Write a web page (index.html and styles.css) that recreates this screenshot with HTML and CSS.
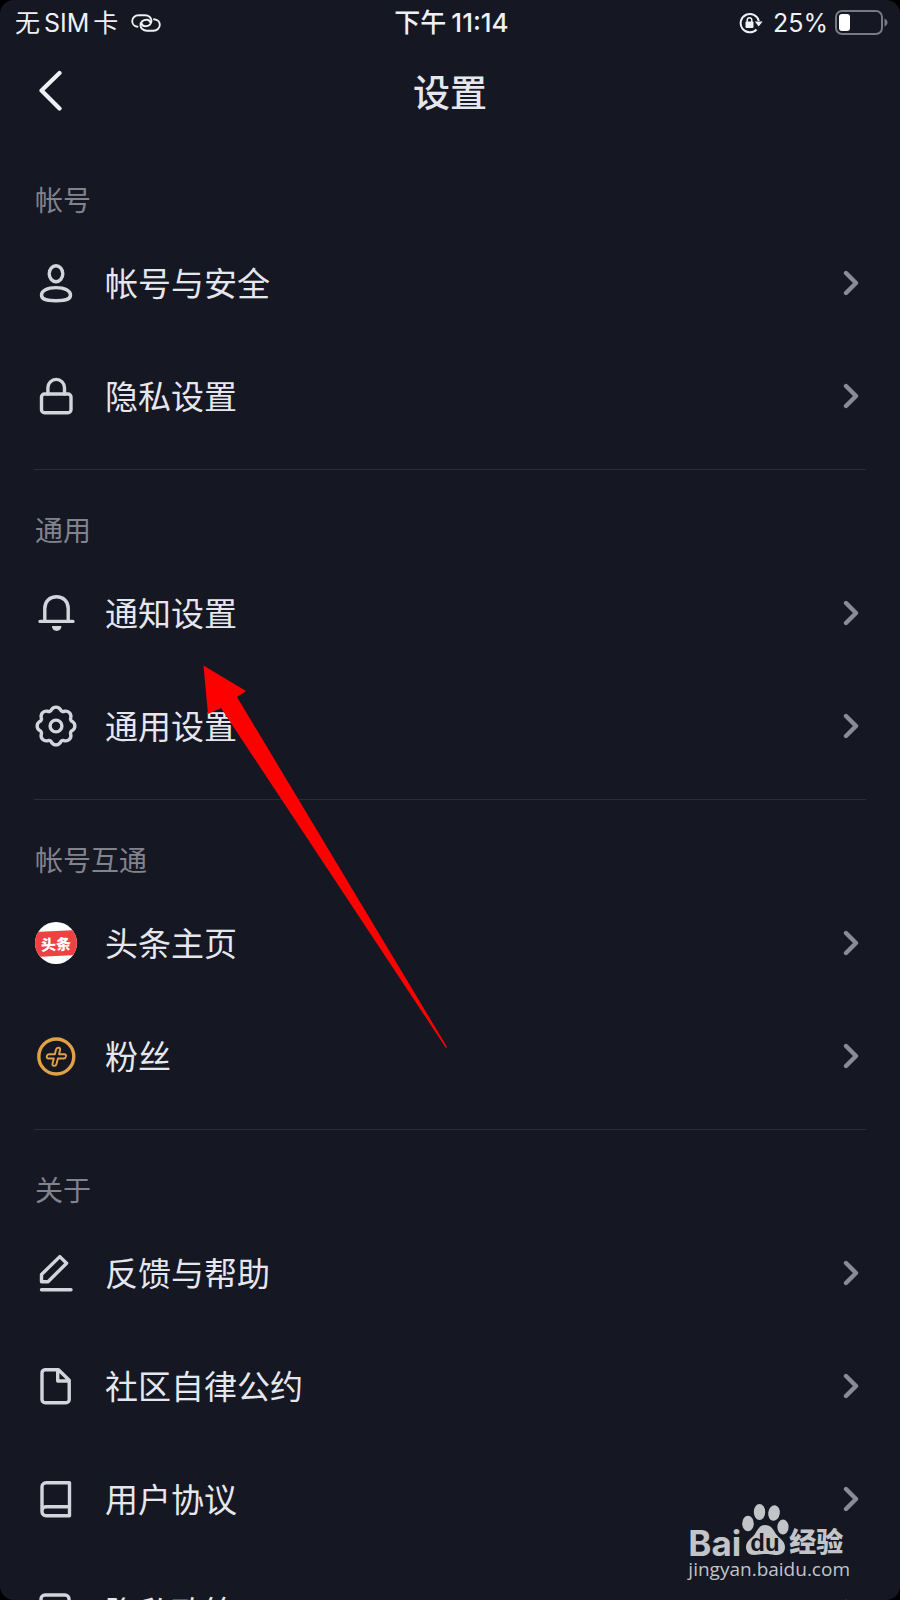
FILE: index.html
```html
<!DOCTYPE html>
<html lang="zh-CN">
<head>
<meta charset="utf-8">
<meta name="viewport" content="width=device-width, initial-scale=1">
<title>设置</title>
<link rel="stylesheet" href="styles.css">
</head>
<body>
<svg class="sprite" width="0" height="0" aria-hidden="true">
  <symbol id="chevron" viewBox="0 0 16 26"><path d="M3 3l10 10L3 23" stroke-width="4.400"/></symbol>
</svg>
<div class="screen">
  <div class="status">
    <div class="status-left">
      <div class="carrier"><span>无</span><span>SIM</span><span>卡</span></div>
      <svg class="line" width="30" height="18" viewBox="0 0 30 18" aria-hidden="true"><path d="M6.500 12.700C3 12.500 1.200 9.500 1.200 7C1.200 3.800 4 1.300 7.500 1.300h6.500c4 0 6.500 2.700 6.500 5.500c0 3.200-2.600 5.400-6 5.400c-2.300 0-3.200-.8-3.200-2M23 5.300c4 .2 5.800 3 5.800 5.500c0 3.400-2.800 5.900-6.300 5.900h-6.500c-4 0-6.500-2.700-6.500-5.500c0-3.200 2.600-5.400 6-5.400c2.300 0 3.200.8 3.200 2" stroke-width="1.900"/></svg>
    </div>
    <div class="status-time"><span>下午</span><span>11:14</span></div>
    <div class="status-right">
      <svg width="24" height="22" viewBox="0 0 24 22" aria-hidden="true"><path d="M17.500 17.500A9.200 9.200 0 1 1 19.800 9" fill="none" stroke="#eff0f5" stroke-width="2"/><path d="M15.800 9.500h7.800l-3.900 5z" fill="#eff0f5"/><rect x="6.500" y="9.600" width="8" height="6.400" rx="1" fill="#eff0f5"/><path d="M8.200 10V8a2.300 2.300 0 0 1 4.600 0v2" fill="none" stroke="#eff0f5" stroke-width="1.500"/></svg>
      <span>25%</span>
      <svg width="53" height="26" viewBox="0 0 53 26" aria-hidden="true"><rect x="1" y="1" width="46" height="23" rx="6" fill="none" stroke="#777983" stroke-width="2"/><rect x="4" y="4" width="11" height="17" rx="3" fill="#fff"/><path d="M49.500 8.500c4 2 4 6 0 8z" fill="#777983"/></svg>
    </div>
  </div>
  <header class="titlebar">
    <button class="back" type="button" aria-label="返回"><svg class="line" width="24" height="42" viewBox="0 0 24 42"><path d="M21.500 3L3.500 20.500l18 18" stroke-width="4.200"/></svg></button>
    <h1 class="title">设置</h1>
  </header>
  <main>
    <section class="group">
      <h2 class="heading">帐号</h2>
      <a class="row" href="#"><svg class="icon" viewBox="0 0 42 42"><ellipse cx="21" cy="11.700" rx="6.800" ry="8"/><path d="M21 25.600c-9 0-14.500 3-14.500 7.500c0 3.500 2.500 5.700 14.500 5.700s14.500-2.200 14.500-5.700c0-4.500-5.500-7.500-14.500-7.500z"/></svg><span class="label">帐号与安全</span><svg class="chevron"><use href="#chevron"/></svg></a>
      <a class="row" href="#"><svg class="icon" viewBox="0 0 42 42"><rect x="6.500" y="19" width="29.500" height="18.700" rx="3"/><path d="M12.900 19v-6.300a8.300 8.300 0 0 1 16.600 0V19"/></svg><span class="label">隐私设置</span><svg class="chevron"><use href="#chevron"/></svg></a>
    </section>
    <section class="group">
      <h2 class="heading">通用</h2>
      <a class="row" href="#"><svg class="icon" viewBox="0 0 42 42"><path d="M5 29.400h33M9.800 29V16.500c0-7 4.800-11.700 11.700-11.700s11.700 4.700 11.700 11.700V29"/><path d="M17 34h9.400c0 6.500-9.400 6.500-9.400 0z" class="solid"/></svg><span class="label">通知设置</span><svg class="chevron"><use href="#chevron"/></svg></a>
      <a class="row" href="#"><svg class="icon" viewBox="0 0 42 42"><circle cx="21" cy="21" r="5.900"/><path d="M16.600 4.500A5.300 5.300 0 0 1 25.400 4.500A3 3 0 0 0 29.600 6.200A5.300 5.300 0 0 1 35.800 12.400A3 3 0 0 0 37.500 16.600A5.300 5.300 0 0 1 37.500 25.400A3 3 0 0 0 35.800 29.600A5.300 5.300 0 0 1 29.600 35.800A3 3 0 0 0 25.400 37.500A5.300 5.300 0 0 1 16.600 37.500A3 3 0 0 0 12.400 35.800A5.300 5.300 0 0 1 6.200 29.600A3 3 0 0 0 4.500 25.400A5.300 5.300 0 0 1 4.500 16.600A3 3 0 0 0 6.200 12.400A5.300 5.300 0 0 1 12.400 6.200A3 3 0 0 0 16.600 4.500z"/></svg><span class="label">通用设置</span><svg class="chevron"><use href="#chevron"/></svg></a>
    </section>
    <section class="group">
      <h2 class="heading">帐号互通</h2>
      <a class="row" href="#"><span class="toutiao"><span class="toutiao-band">头条</span></span><span class="label">头条主页</span><svg class="chevron"><use href="#chevron"/></svg></a>
      <a class="row" href="#"><svg class="icon fans" viewBox="0 0 42 42"><circle cx="21.300" cy="21.500" r="17.500"/><path d="M21 14.500q.5-2 2.600-1.800q2 .2 1.500 2l-1.100 4.500h5.300q2 .2 1.700 2.200q-.4 2-2.300 2.100h-5.800l-1.400 5.600q-.5 2-2.500 1.800q-2-.2-1.500-2.200l1.300-5.200h-5.300q-2-.2-1.700-2.200q.4-2 2.300-2.100h5.800z" stroke-width="1.900"/></svg><span class="label">粉丝</span><svg class="chevron"><use href="#chevron"/></svg></a>
    </section>
    <section class="group">
      <h2 class="heading">关于</h2>
      <a class="row" href="#"><svg class="icon" viewBox="0 0 42 42"><path d="M24.800 4.600l6.800 6.600L13 29.700H6.500v-7.200zM6.500 37.700H36"/></svg><span class="label">反馈与帮助</span><svg class="chevron"><use href="#chevron"/></svg></a>
      <a class="row" href="#"><svg class="icon" viewBox="0 0 42 42"><path d="M10 4.700h13.500l10.700 10.600v19.200a3.200 3.200 0 0 1-3.200 3.200H10.200a3.200 3.200 0 0 1-3.200-3.200V8a3.200 3.200 0 0 1 3-3.300zM22.700 5v11h11"/></svg><span class="label">社区自律公约</span><svg class="chevron"><use href="#chevron"/></svg></a>
      <a class="row" href="#"><svg class="icon" viewBox="0 0 42 42"><path d="M34.500 37.700V4.700H11a4 4 0 0 0-4 4v25a4 4 0 0 0 4 4zM7 33.500a4 4 0 0 1 4-4.700h23.500"/></svg><span class="label">用户协议</span><svg class="chevron"><use href="#chevron"/></svg></a>
      <a class="row" href="#"><svg class="icon" viewBox="0 0 42 42"><rect x="6" y="4" width="28" height="34" rx="4"/></svg><span class="label">隐私政策</span><svg class="chevron"><use href="#chevron"/></svg></a>
    </section>
  </main>
  <svg class="pointer" width="246" height="386" viewBox="0 0 246 386" aria-hidden="true"><path d="M0.500 0.500L43 26L34 32L244 382L243 383L18 43L5 49z" fill="#f00"/></svg>
  <div class="watermark">
    <div class="wm-logo">
      <span class="wm-bai">Bai</span>
      <span class="wm-paw"><svg width="48" height="52" viewBox="0 0 48 52" aria-hidden="true"><g fill="#c3c4c8"><ellipse cx="7" cy="19.500" rx="5.800" ry="7.700"/><ellipse cx="18.500" cy="8" rx="5.700" ry="8"/><ellipse cx="33" cy="9" rx="5.800" ry="7.800" transform="rotate(8 33 9)"/><ellipse cx="42" cy="23" rx="5.600" ry="7.600"/><path d="M24 21c6 0 8 4 11 9c3 4 9 7 9 13s-4 8-9 8c-4 0-6-1-11-1s-7 1-11 1c-5 0-8-3-8-8c0-6 6-9 9-13c3-5 5-9 10-9z"/></g></svg><span class="wm-du">du</span></span>
      <span class="wm-jy">经验</span>
    </div>
    <div class="wm-url">jingyan.baidu.com</div>
  </div>
</div>
</body>
</html>
```
FILE: styles.css
```css
* { box-sizing: border-box; }
body {
  margin: 0;
  background: #000;
  color: #e6e7ee;
  font-family: "Noto Sans CJK SC", sans-serif;
}
.sprite { position: absolute; }
.screen {
  position: relative;
  height: 100vh;
  overflow: hidden;
  border-radius: 14px;
  background: #151722;
}
.status {
  display: grid;
  grid-template-columns: 1fr auto 1fr;
  align-items: center;
  height: 46px;
  padding: 0 12px 0 15px;
  color: #eff0f5;
  font: 25px/46px Inter, "Noto Sans CJK SC", sans-serif;
}
.status-left, .status-right, .carrier, .status-time { display: flex; align-items: center; }
.status-left { gap: 13px; }
.carrier { gap: 4px; }
.status-right { justify-content: flex-end; gap: 7px; }
.status-right span { margin-left: 3px; }
.status-time { gap: 5px; font-size: 26px; font-weight: 500; }
.line, .chevron, .icon {
  fill: none;
  stroke: #eff0f5;
  stroke-linecap: round;
  stroke-linejoin: round;
}
.titlebar {
  display: grid;
  grid-template-columns: 1fr auto 1fr;
  align-items: center;
  height: 93px;
  padding: 0 38px 3px;
}
.back {
  justify-self: start;
  display: flex;
  padding: 0;
  border: 0;
  background: none;
}
.title { margin: 0; font-size: 37px; font-weight: 500; line-height: 54px; }
.group { padding: 34px 35px 17px; }
.group + .group {
  padding-top: 33px;
  border-top: 1px solid;
  border-image: linear-gradient(90deg, transparent 35px, #2b2d37 35px, #2b2d37 calc(100% - 35px), transparent calc(100% - 35px)) 1;
}
.heading {
  margin: 0 0 1px;
  color: #81838d;
  font-size: 28px;
  font-weight: 400;
  line-height: 52px;
}
.row {
  display: flex;
  align-items: center;
  gap: 28px;
  height: 113px;
  padding: 1px 6px 0 0;
  color: inherit;
  text-decoration: none;
}
.icon { width: 42px; height: 42px; stroke: #d3d4dc; stroke-width: 3.4; }
.icon .solid { fill: #d3d4dc; stroke: none; }
.icon.fans { stroke: #e2a142; }
.label { flex: 1; padding-bottom: 2px; font-size: 33px; line-height: 48px; }
.chevron { width: 16px; height: 26px; stroke: #8a8b96; }
.toutiao {
  display: flex;
  align-items: center;
  justify-content: center;
  width: 42px;
  height: 42px;
  overflow: hidden;
  border-radius: 50%;
  background: #fff;
}
.toutiao-band {
  flex: none;
  width: 48px;
  background: #f04142;
  color: #fff;
  font-size: 15px;
  font-weight: 900;
  line-height: 25px;
  text-align: center;
  transform: rotate(-3deg);
}
.pointer { position: absolute; left: 203px; top: 665px; }
.watermark { position: absolute; right: 50px; bottom: 18px; color: #c3c4c8; }
.wm-logo { display: flex; align-items: flex-end; height: 52px; }
.wm-bai { font: 700 35px/26px Inter, sans-serif; }
.wm-paw { position: relative; display: flex; }
.wm-du {
  position: absolute;
  left: 9px;
  bottom: 1px;
  color: #151722;
  font: 700 24px/24px "Liberation Sans", sans-serif;
}
.wm-jy { font-size: 27px; font-weight: 900; line-height: 30px; }
.wm-url { font: 500 19px/26px "Open Sans", sans-serif; }
```
